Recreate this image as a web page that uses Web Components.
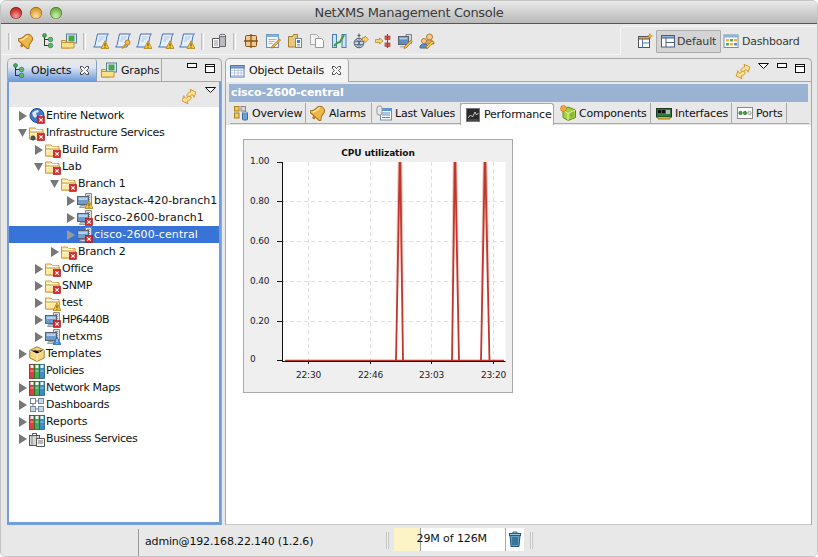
<!DOCTYPE html>
<html><head><meta charset="utf-8"><title>NetXMS Management Console</title>
<style>
html,body{margin:0;padding:0;background:#fff;width:818px;height:557px;overflow:hidden}
body{font:11px "DejaVu Sans",sans-serif;color:#111}
</style></head><body>
<x-window>
  <x-titlebar>NetXMS Management Console</x-titlebar>
  <x-coolbar></x-coolbar>
  <x-workspace>
    <x-pane slot="left" active style="width:215px">
      <x-tab slot="tabs" icon="tree" active closable w="90">Objects</x-tab>
      <x-tab slot="tabs" icon="foldermap" w="65">Graphs</x-tab>
      <x-object-tree></x-object-tree>
    </x-pane>
    <x-pane slot="right" style="width:587px">
      <x-tab slot="tabs" icon="table" current closable w="123">Object Details</x-tab>
      <x-details></x-details>
    </x-pane>
  </x-workspace>
  <x-status></x-status>
</x-window>
<script>
const X='<rect x="8.5" y="8.5" width="7" height="7" fill="#d9282e" stroke="#a81216" stroke-width=".6"/><path d="M10.300 10.300l3.400 3.400M13.700 10.300l-3.400 3.400" stroke="#fff" stroke-width="1.100"/>';
const W='<path d="M12 7.800l4 7.700H8z" fill="#f7c52e" stroke="#a87a10" stroke-width=".7"/><path d="M12 10.300v2.800M12 13.800v.9" stroke="#333" stroke-width=".9"/>';
const N='<path d="M12 7.800l4 7.700H8z" fill="#3f8fe0" stroke="#1d5da8" stroke-width=".7"/><path d="M12 10.300v2.800M12 13.800v.9" stroke="#fff" stroke-width=".9"/>';
const folder='<path d="M.5 14V3h5.500l1.500 1.500H14V14z" fill="#fbe6a6" stroke="#d49a3a"/><path d="M2 5.500h10.500" stroke="#fff" stroke-width="1.500"/><path d="M.5 14V7h14v7z" fill="#fde9a4" stroke="#d49a3a"/><path d="M1.500 8.500h12" stroke="#fff7d6"/>';
const monitor='<path d="M8.500 .5h6v11h-6z" fill="#dcdee0" stroke="#858b90"/><path d="M10 2.500h3M10 4.500h3M10 6.500h3" stroke="#8f959a"/><rect x=".5" y="3.500" width="11" height="8" fill="#6f9ad0" stroke="#5a646e"/><path d="M1.500 4.500h9v2.500h-9z" fill="#b4d0ee"/><path d="M3.500 12.500h5l1 2h-7z" fill="#c4c8cc" stroke="#6e7378" stroke-width=".6"/>';
const books='<rect x=".5" y="1.500" width="5" height="14" fill="#d9433f" stroke="#8e1d1b" stroke-width=".8"/><rect x="1.500" y="2" width="3" height="3" fill="#f6f6f6"/><rect x="5.500" y="1.500" width="5" height="14" fill="#4aa85a" stroke="#256b25" stroke-width=".8"/><rect x="6.500" y="2" width="3" height="3" fill="#f6f6f6"/><rect x="10.500" y="1.500" width="5" height="14" fill="#3d8cc8" stroke="#1c5c8e" stroke-width=".8"/><rect x="11.500" y="2" width="3" height="3" fill="#f6f6f6"/><path d="M1.500 8h3M6.500 8h3M11.500 8h3" stroke="#fff" stroke-opacity=".6"/>';
const script='<path d="M4.500 1h11c-1 .5-1.500 1.500-1.700 2.500L12 14H.5c1-.7 1.500-1.500 1.700-2.500z" fill="#e6effc" stroke="#4470b4"/><path d="M6 4h6M5.500 6h5M5 8h3" stroke="#a3bde2" stroke-width=".8"/>';
const syncArrow='<path d="M5.800 8C6 5.500 7.800 4 10 3.800L9 1.300 14.800 4 13.200 9.300 11.800 6.800C10.300 6.900 9.200 7.500 8.700 9z" fill="#fbe39a" stroke="#d99a2c"/>';
const ICONS={
bell:'<g transform="rotate(42 8 8)"><path d="M8 .6c3.200 0 4.500 2.400 4.500 5.200 0 2.800 1 4.200 2.400 5.500v1.500H1.100v-1.500C2.500 10 3.500 8.600 3.500 5.800 3.500 3 4.800.6 8 .6z" fill="#eeb548" stroke="#a9701c"/><path d="M6 3C5 5 5.500 8 3.500 11" stroke="#fdeab0" stroke-width="1.400" fill="none"/><circle cx="8" cy="14.300" r="1.500" fill="#b8791f"/></g>',
tree:'<path d="M4.500 2v11M4.500 6.500H9M4.500 12.500H9" stroke="#333" fill="none"/><circle cx="4.500" cy="2.500" r="2" fill="#4aa85a" stroke="#24703a" stroke-width=".6"/><circle cx="10.500" cy="6.500" r="2.300" fill="#5cb86a" stroke="#24703a" stroke-width=".6"/><circle cx="10.500" cy="12.500" r="2.300" fill="#5cb86a" stroke="#24703a" stroke-width=".6"/>',
foldermap:'<path d="M.5 15V7.500h4l1 1h3V15z" fill="#f8d77e" stroke="#c8912e"/><rect x="5.500" y="1" width="10" height="9" fill="#d8e6f2" stroke="#5c7f96"/><rect x="7.500" y="2.500" width="6" height="6" fill="#4ea34e"/><path d="M.5 15V9.500h12.500V15z" fill="#fbe08a" stroke="#c8912e"/>',
scriptw:script+W, scriptk:script+'<circle cx="12.500" cy="9.500" r="2.500" fill="#f0bc48" stroke="#a9701c" stroke-width=".8"/><path d="M10.800 11.500L7 15.500" stroke="#d2932a" stroke-width="2"/>',
docdb:'<path d="M1.500 5.500h7v9h-7z" fill="#fff" stroke="#555"/><path d="M3 8h4M3 10h4M3 12h4" stroke="#777" stroke-width=".8"/><path d="M8.500 2.500h6v11h-6z" fill="#b8bcc0" stroke="#666"/><ellipse cx="11.500" cy="2.500" rx="3" ry="1.200" fill="#e2e4e6" stroke="#666"/>',
grid:'<rect x="2.500" y="2.500" width="11" height="11" rx="1" fill="#ecca8a" stroke="#8a4e1c"/><path d="M8 1v14M1 8h14" stroke="#8a4e1c" stroke-width="1.300"/>',
note:'<rect x="1.500" y="1.500" width="12" height="13" fill="#f4f8fc" stroke="#6d8fb5"/><rect x="1.500" y="1.500" width="12" height="2.500" fill="#7fb0e0"/><path d="M3.500 6.500h8M3.500 8.500h6M3.500 10.500h4" stroke="#9fb6cf"/><path d="M14.500 6l1.200 1.200L8.500 14.500l-2 .5.500-2z" fill="#f0b748" stroke="#a9701c" stroke-width=".7"/>',
folderdoc:'<path d="M1.500 14V3.500h4l1-2h4V14z" fill="#e8c67a" stroke="#a57d2e"/><rect x="8.500" y="5.500" width="6" height="9" fill="#fff" stroke="#6d8aa5"/><rect x="10" y="7" width="3" height="3" fill="#4a82bc"/><path d="M10 11.500h3M10 13h3" stroke="#888" stroke-width=".8"/>',
copy:'<path d="M1.500 1.500h6l2 2v8h-8z" fill="#f4f4f4" stroke="#aaa"/><path d="M6.500 5.500h6l2 2v7h-8z" fill="#fff" stroke="#999"/>',
chart:'<rect x="1.500" y="1.500" width="4" height="13" fill="#cfe3f6" stroke="#4a7fb5"/><rect x="11" y="1.500" width="4" height="13" fill="#cfe3f6" stroke="#4a7fb5"/><path d="M3 13l3-3 3-1 4-7" stroke="#3c9a3c" stroke-width="2" fill="none"/>',
netarrow:'<circle cx="6" cy="10" r="4.800" fill="#c8d4e2" stroke="#4a5a72"/><path d="M2 8.500h8M2 11.500h8M6 5.500v9M3.500 6.500l5 7M8.500 6.500l-5 7" stroke="#4a5a72" stroke-width=".7"/><path d="M6 .5v4M4.500 2.500h3" stroke="#555"/><path d="M9.500 4.500H12V3l3.500 3.300L12 9.500V8H9.500z" fill="#f6d470" stroke="#b0811c" stroke-width=".7"/>',
arrownode:'<path d="M.5 6.500h4V5L8 8l-3.500 3V9.500h-4z" fill="#f6d470" stroke="#b0811c" stroke-width=".7"/><rect x="10" y="3" width="5" height="3.500" fill="#e05a50" stroke="#a02820" stroke-width=".6"/><rect x="10" y="10" width="5" height="3.500" fill="#e05a50" stroke="#a02820" stroke-width=".6"/><path d="M12.500 1v14" stroke="#555"/>',
pcedit:'<path d="M9 1.500h5.500v9H9z" fill="#d6d8da" stroke="#7d8388"/><rect x="1.500" y="3.500" width="10" height="8" fill="#5e8cc4" stroke="#5a646e"/><path d="M2.500 4.500h8v2h-8z" fill="#a9c8ea"/><path d="M3 13h7v1.500H3z" fill="#b4b8bc"/><path d="M14 7l1.500 1.500L9 15l-2 .5.500-2z" fill="#f0b748" stroke="#a9701c" stroke-width=".7"/>',
users:'<circle cx="10.500" cy="4" r="3" fill="#f3c98d" stroke="#b07c3a"/><path d="M6 11c0-3 2-4 4.500-4S15 8 15 11z" fill="#e8a54a" stroke="#b07c3a"/><circle cx="5" cy="8" r="2.500" fill="#f3c98d" stroke="#b07c3a"/><path d="M1 15c0-3 1.500-4 4-4s4 1 4 4z" fill="#5e8cc4" stroke="#3f6a9c"/><path d="M13 8l1.500 1.500L9 15l-2 .5.500-2z" fill="#f0d048" stroke="#a9701c" stroke-width=".7"/>',
sync:`${syncArrow}<g transform="rotate(180 8 8.500)">${syncArrow}</g>`,
newpersp:'<rect x="1.500" y="3.500" width="11" height="11" fill="#fff" stroke="#555"/><path d="M1.500 3.500h11V6h-11z" fill="#f0a050" stroke="#555"/><path d="M5.500 6v8.500M5.500 10h7" stroke="#4a7fb5"/><path d="M13 .5l.8 1.700 1.700.8-1.700.8-.8 1.700-.8-1.700-1.700-.8 1.700-.8z" fill="#f4c030" stroke="#b08010" stroke-width=".5"/>',
layout:'<rect x="1.500" y="2.500" width="13" height="11.500" fill="#fff" stroke="#46607e"/><rect x="1.500" y="2.500" width="13" height="2.500" fill="#8cb4dc" stroke="#46607e"/><path d="M6 5v9M6 9.500h8.500" stroke="#46607e"/>',
dash:'<rect x="1" y="2" width="14" height="12.500" fill="#fff" stroke="#6d8fb5"/><rect x="1" y="2" width="14" height="2.500" fill="#8cb4dc"/><rect x="3" y="6" width="3" height="2.500" fill="#e8b830"/><rect x="7" y="6" width="3" height="2.500" fill="#5caa5c"/><rect x="11" y="6" width="3" height="2.500" fill="#e8b830"/><rect x="3" y="10" width="3" height="2.500" fill="#5caa5c"/><rect x="7" y="10" width="3" height="2.500" fill="#e8b830"/><rect x="11" y="10" width="3" height="2.500" fill="#5c8ac8"/>',
table:'<rect x="1.500" y="2.500" width="13.500" height="11.500" fill="#fff" stroke="#5678a8"/><rect x="1.500" y="2.500" width="13.500" height="2.500" fill="#7ea6d8" stroke="#5678a8"/><path d="M2 7.500h13M2 10h13M2 12.500h13M5.500 5v9M9 5v9M12 5v9" stroke="#a9bfdc" stroke-width=".8"/>',
overview:'<rect x="1.500" y="1.500" width="4.500" height="4.500" fill="#f3cc60" stroke="#a8801c"/><rect x="8" y="1.500" width="4.500" height="4.500" fill="#d8d8d8" stroke="#888"/><rect x="1.500" y="8" width="4.500" height="5" fill="#f3cc60" stroke="#a8801c"/><rect x="9.500" y="7.500" width="5" height="7.500" rx="1" fill="#6ea2d8" stroke="#3f6a9c"/><ellipse cx="12" cy="7.800" rx="2.500" ry="1" fill="#bcd6f0" stroke="#3f6a9c" stroke-width=".6"/>',
lastvalues:'<rect x="4.500" y="3.500" width="11" height="11.500" fill="#fff" stroke="#6d8fb5"/><rect x="4.500" y="3.500" width="11" height="2.500" fill="#5a9ad8"/><path d="M6 8h8M6 10h8M6 12.500h8" stroke="#4f86c0"/><rect x="1" y="1" width="5" height="9" rx="2" fill="#e8e8e8" stroke="#999"/>',
perf:'<rect x="1.500" y="1.500" width="13" height="13" fill="#2c2c2c" stroke="#777"/><path d="M3 11l2.500-3 2 2 2.500-5 1.500 3 2-2" stroke="#c8c8c8" fill="none"/><path d="M3 13h10" stroke="#666"/>',
comp:'<path d="M8 2l7.500 3v7.500L8 15.500 3 12.500V5z" fill="#a4d040" stroke="#5f8c1c"/><path d="M8 8.500v7M8 8.500L15.500 5M8 8.500L3 5" stroke="#e4f2a8"/><path d="M11 7.500v5M13 6.500v5" stroke="#5f8c1c" stroke-width=".7"/><circle cx="3.500" cy="3.500" r="3" fill="#f2a83c" stroke="#b8761c" stroke-width=".6"/>',
iface:'<rect x=".5" y="3.500" width="15" height="8.500" fill="#2f7a3a" stroke="#1a3c20"/><rect x="2" y="5" width="3" height="3" fill="#111"/><rect x="6" y="5" width="3" height="3" fill="#111"/><rect x="10" y="5" width="4" height="4" fill="#b7b7b7"/><path d="M2 12v2h12v-2" fill="#d6b13c" stroke="#9a7c1c"/>',
ports:'<rect x=".5" y="2.500" width="15" height="11" fill="#fff" stroke="#888"/><circle cx="3.500" cy="8" r="1.700" fill="#4aa04a" stroke="#255c25" stroke-width=".6"/><circle cx="8" cy="8" r="1.700" fill="#4aa04a" stroke="#255c25" stroke-width=".6"/><circle cx="12.500" cy="8" r="1.700" fill="#e8e8e8" stroke="#666" stroke-width=".6"/>',
trash:'<path d="M3 4.500h10l-1 11H4z" fill="#5f9fc4" stroke="#1f5a82"/><path d="M6 6v8M8 6v8M10 6v8" stroke="#174a6c"/><rect x="2.500" y="2.500" width="11" height="2" fill="#a2c8de" stroke="#1f5a82"/><path d="M6 2.500V1h4v1.500" fill="none" stroke="#1f5a82"/>',
globe:'<circle cx="8" cy="7.500" r="7" fill="#3f78c8" stroke="#1c4c94"/><path d="M3 5c2-2 4-3 6-3l1 2-3 1 1 3-2 2-2-2zM10 8l3-1 1 2-3 3z" fill="#dfe9f6"/>',
sfolder:folder, net:monitor, books,
infra:folder+'<circle cx="4" cy="13" r="2.200" fill="#555" stroke="#222" stroke-width=".5"/>',
box:'<path d="M8 .8l7.200 3.400v7.800L8 15.500.8 12V4.200z" fill="#f6d680" stroke="#a57d2e"/><path d="M1 4.500l7 3.600 7-3.600M8 8.100v7.200" stroke="#fff3c8"/><path d="M4.500 2.500l7 3.700" stroke="#d8ad4a"/>',
dashs:'<rect x="1.500" y="1.500" width="5" height="5" fill="#fff" stroke="#7a8a9c"/><rect x="9.500" y="1.500" width="5" height="5" fill="#c9d6e6" stroke="#7a8a9c"/><rect x="1.500" y="9.500" width="5" height="5" fill="#c9d6e6" stroke="#7a8a9c"/><rect x="9.500" y="9.500" width="5" height="5" fill="#c9d6e6" stroke="#7a8a9c"/><path d="M4 6.500v3M7 4h2.500M7 12h2.500" stroke="#4a7fb5"/>',
biz:'<rect x=".5" y="4.500" width="10" height="10" fill="#d4d6d8" stroke="#555"/><path d="M3.500 4.500v-2h4v2" fill="none" stroke="#555"/><path d="M3 5v9M7.500 5v9" stroke="#888"/><path d="M7.500 7.500h8v8h-8z" fill="#f4f4f4" stroke="#555"/><path d="M9 10h5M9 12h5" stroke="#777"/>'
};
const TRI='<svg width="11" height="6" viewBox="0 0 11 6" style="display:block;flex:none"><path d="M.5.500h10L5.500 5.500z" fill="#fff" stroke="#111"/></svg>';
function def(n,cls){customElements.define(n,cls)}
function shadow(el,html){el.attachShadow({mode:'open'}).innerHTML=html;return el.shadowRoot}
def('x-icon',class extends HTMLElement{connectedCallback(){
  const n=this.getAttribute('name'),b=this.getAttribute('badge');
  const bb=b=='x'?X:b=='w'?W:b=='n'?N:'';
  shadow(this,`<style>:host{display:block;width:16px;height:16px;flex:none}svg{display:block}</style><svg width="16" height="16" viewBox="0 0 16 16">${ICONS[n]||''}${bb}</svg>`);
}});
def('x-window',class extends HTMLElement{connectedCallback(){
  shadow(this,`<style>:host{display:flex;flex-direction:column;width:818px;height:557px;box-sizing:border-box;background:#e8e8e8;border:1px solid #c4c4c4;border-radius:6px 6px 5px 5px;overflow:hidden}</style><slot></slot>`);
}});
def('x-titlebar',class extends HTMLElement{connectedCallback(){
  shadow(this,`<style>:host{display:flex;align-items:center;height:22px;flex:none;position:relative;justify-content:center;background:linear-gradient(#e9e9e9,#b9b9b9);border-bottom:1px solid #565656;font:13px "DejaVu Sans",sans-serif;color:#3a3a3a;letter-spacing:-.31px}
  .l{position:absolute;left:9px;top:6px;display:flex;gap:8px}
  i{display:block;width:12px;height:12px;border-radius:50%;box-shadow:inset 0 0 0 .5px rgba(0,0,0,.45)}
  .r{background:radial-gradient(circle at 50% 75%,#f6a09c,#c9302c 60%,#9c2020)}.y{background:radial-gradient(circle at 50% 75%,#fde0a0,#e0a030 60%,#b07c18)}.g{background:radial-gradient(circle at 50% 75%,#d0f0b0,#76b84c 60%,#4c8a2c)}
  </style><div class="l"><i class="r"></i><i class="y"></i><i class="g"></i></div><slot></slot>`);
}});
const grip='<b class="grip"></b>';
def('x-coolbar',class extends HTMLElement{connectedCallback(){
  const ic=(a)=>a.map(n=>`<x-icon name="${n}"></x-icon>`).join('');
  shadow(this,`<style>:host{display:flex;flex:none;height:34px;box-sizing:border-box;align-items:stretch;background:#e8e8e8}
  .tools{flex:1;display:flex;align-items:center;padding:4px 0 0 7px;box-sizing:border-box;height:31px;border-bottom:1px solid #f6f6f6}
  .gp{display:flex;gap:5.500px;margin-right:6px}.gp.w{gap:6px}
  .grip{display:block;width:1px;height:17px;border:1px solid #bdbdbd;border-right-color:#fff;border-width:0 1px;flex:none;background:#e0e0e0;margin-right:7px}
  .p{width:197px;box-sizing:border-box;margin-top:2px;height:29px;border:1px solid #f6f6f6;border-right:0;border-bottom:0;border-top-left-radius:4px;display:flex;align-items:center;padding-left:16px;color:#3a3a3a;gap:3px}
  .btn{display:flex;align-items:center;gap:3px;height:23px;box-sizing:border-box}
  .on{background:#d4d4d4;border:1px solid #ababab;width:65px;border-radius:1px;padding-left:3px;gap:1px}
  span{letter-spacing:-.13px}.btn:last-child span{letter-spacing:-.25px}.btn:last-child{margin-left:-1px}
  </style><div class="tools">${grip}<div class="gp">${ic(['bell','tree','foldermap'])}</div>${grip}<div class="gp">${ic(['scriptw','scriptk','scriptw','scriptw','scriptw'])}</div>${grip}<div class="gp">${ic(['docdb'])}</div>${grip}<div class="gp w">${ic(['grid','note','folderdoc','copy','chart','netarrow','arrownode','pcedit','users'])}</div></div>
  <div class="p"><x-icon name="newpersp"></x-icon><div class="btn on"><x-icon name="layout"></x-icon><span>Default</span></div><div class="btn"><x-icon name="dash"></x-icon><span>Dashboard</span></div></div>`);
}});
def('x-workspace',class extends HTMLElement{connectedCallback(){
  shadow(this,`<style>:host{display:flex;gap:3px;flex:none;height:467px;padding:0 5px 0 6px;box-sizing:content-box}::slotted(*){height:100%}</style><slot name="left"></slot><slot name="right"></slot>`);
}});
def('x-tab',class extends HTMLElement{connectedCallback(){
  const a=this.hasAttribute('active'),c=this.hasAttribute('current');
  shadow(this,`<style>:host{display:flex;align-items:center;height:23px;box-sizing:border-box;width:${this.getAttribute('w')}px;padding-left:${a?3:4}px;gap:4px;border-right:1px solid #a6a6a6;color:#111;letter-spacing:-.18px;border-bottom:1px solid #a6a6a6;flex:none;border-top-left-radius:4px;
  ${a?'background:linear-gradient(#e8e8e8 8%,#dfe6f0 35%,#78a1de 90%,#6c9ade);border-right-color:#8a9fc0;border-bottom:0;border-top-right-radius:3px;border-left:1px solid #a6a6a6':''}
  ${c?'background:#f4f4f4;border-bottom:0;border-top-right-radius:3px;padding-left:3px':''}}
  svg{margin-left:auto;margin-right:6px}</style><x-icon name="${this.getAttribute('icon')}"></x-icon><slot></slot>${this.hasAttribute('closable')?'<svg width="11" height="11" viewBox="0 0 11 11"><path d="M1.500 1.500h2l2 2 2-2h2v2l-2 2 2 2v2h-2l-2-2-2 2h-2v-2l2-2-2-2z" fill="#fff" stroke="#222" stroke-width=".8"/></svg>':''}`);
}});
const minmax='<svg width="10" height="5" viewBox="0 0 10 5" style="display:block;flex:none"><rect x=".5" y=".5" width="9" height="4" fill="#fff" stroke="#111"/></svg><svg width="10" height="9" viewBox="0 0 10 9" style="display:block;flex:none;margin-top:1px"><rect x=".5" y=".5" width="9" height="8" fill="#fff" stroke="#111"/><path d="M0 2.500h10" stroke="#111"/></svg>';
def('x-pane',class extends HTMLElement{connectedCallback(){
  const a=this.hasAttribute('active');
  shadow(this,`<style>:host{display:flex;flex-direction:column;box-sizing:border-box;border:1px solid #a6a6a6;border-radius:5px 5px 0 0;background:#e8e8e8;flex:none;overflow:hidden;${a?'border-width:1px 1px 0 0':'border-bottom-color:#c8c8c8'}}
  .bar{display:flex;height:23px;flex:none;position:relative}
  .fill{flex:1;border-bottom:1px solid #a6a6a6;display:flex;align-items:flex-start;padding-top:4px;box-sizing:border-box;justify-content:flex-end;gap:8px;padding-right:6px}
  .fill x-icon{margin:0 -1px 0 0}
  .body{flex:1;min-height:0;display:flex;flex-direction:column;${a?'border:2px solid #739ede;border-top:0;border-bottom-width:3px;background:#fff':''}}
  </style><div class="bar"><slot name="tabs"></slot><div class="fill">${a?'':`<x-icon name="sync"></x-icon>${TRI}`}${minmax}</div></div><div class="body"><slot></slot></div>`);
}});
def('x-tree-row',class extends HTMLElement{connectedCallback(){
  const d=+this.getAttribute('d')||0,ar=this.getAttribute('a'),sel=this.hasAttribute('sel');
  const arrow=ar=='o'?`<polygon points="0,2 9,2 4.500,10" fill="#777"/>`:ar=='c'?`<polygon points="1,1 9,6 1,11" fill="${sel?'#9a9a9a':'#777'}"/>`:'';
  shadow(this,`<style>:host{display:flex;align-items:center;height:17px;flex:none;box-sizing:border-box;padding-left:${9+16*d}px;white-space:nowrap;overflow:hidden;letter-spacing:${this.getAttribute('ls')}px;${sel?'background:#3873d7;color:#fff':''}}
  svg{flex:none;margin-right:2px}.t{margin-left:1px}</style><svg width="9" height="12" viewBox="0 0 9 12">${arrow}</svg><x-icon name="${this.getAttribute('i')}" badge="${this.getAttribute('b')||''}"></x-icon><span class="t"><slot></slot></span>`);
}});
def('x-object-tree',class extends HTMLElement{connectedCallback(){
  const rows=[
  [0,'c','globe','x','Entire Network',0,-.27],[0,'o','infra','x','Infrastructure Services',0,-.29],[1,'c','sfolder','x','Build Farm',0,-.22],[1,'o','sfolder','x','Lab',0,-.12],[2,'o','sfolder','x','Branch 1',0,-.22],
  [3,'c','net','w','baystack-420-branch1',0,-.02],[3,'c','net','x','cisco-2600-branch1',0,.05],[3,'c','net','x','cisco-2600-central',1,.1],[2,'c','sfolder','x','Branch 2',0,-.22],[1,'c','sfolder','x','Office',0,-.2],[1,'c','sfolder','x','SNMP',0,-.3],[1,'c','sfolder','w','test',0,-.12],[1,'c','net','x','HP6440B',0,-.5],[1,'c','net','n','netxms',0,-.12],
  [0,'c','box','','Templates',0,-.05],[0,'','books','','Policies',0,-.35],[0,'c','books','','Network Maps',0,-.35],[0,'c','dashs','','Dashboards',0,-.22],[0,'c','books','','Reports',0,-.12],[0,'c','biz','','Business Services',0,-.42]];
  shadow(this,`<style>:host{display:flex;flex-direction:column;flex:1;min-height:0;background:#fff}
  .tb{height:25px;flex:none;background:#e8e8e8;display:flex;justify-content:flex-end;align-items:flex-start;gap:8px;padding:5px 3px 0 0;box-sizing:border-box}
  .tb x-icon{margin-top:1px}
  .list{flex:1;display:flex;flex-direction:column}
  </style><div class="tb"><x-icon name="sync"></x-icon>${TRI}</div><div class="list">${rows.map(r=>`<x-tree-row d="${r[0]}" a="${r[1]}" i="${r[2]}" b="${r[3]}" ls="${r[6]}"${r[5]?' sel':''}>${r[4]}</x-tree-row>`).join('')}</div>`);
}});
def('x-dtab',class extends HTMLElement{connectedCallback(){
  const on=this.hasAttribute('on');
  shadow(this,`<style>:host{display:flex;align-items:center;box-sizing:border-box;height:${on?22:21}px;width:${this.getAttribute('w')}px;padding-left:${this.getAttribute('p')||4}px;gap:3px;flex:none;letter-spacing:-.2px;color:#111;border-right:1px solid #a8a8a8;border-bottom:1px solid #a8a8a8;${on?'background:#fff;border:1px solid #a8a8a8;border-bottom:0;border-radius:3px 3px 0 0;margin-left:-1px;z-index:1':''}}</style><x-icon name="${this.getAttribute('i')}"></x-icon><slot></slot>`);
}});
def('x-chart',class extends HTMLElement{connectedCallback(){
  const ys=[[161,'1.00'],[200.5,'0.80'],[240.5,'0.60'],[280.5,'0.40'],[320.5,'0.20'],[359.5,'0']];
  const xs=[[308.5,'22:30'],[370.5,'22:46'],[431.5,'23:03'],[493.5,'23:20']];
  const ox=243,oy=138;
  const spike=(a,b,c)=>`<path d="M${a-ox-.5} ${360-oy}L${b-ox-.5} ${161-oy}M${b-ox+.5} ${161-oy}L${c-ox+.5} ${360-oy}" stroke="url(#pale)" stroke-width="3.400" fill="none"/><path d="M${a-ox} ${360-oy}L${b-ox-.3} ${161-oy}M${b-ox+.3} ${161-oy}L${c-ox} ${360-oy}" stroke="#c0352c" stroke-width="1.800" fill="none"/>`;
  shadow(this,`<style>:host{display:block;width:270px;height:254px;flex:none;margin:14px 0 0 17px}svg{display:block}text{font:9px "DejaVu Sans",sans-serif;fill:#1c2230;letter-spacing:-.2px}</style>
  <svg width="270" height="254" viewBox="0 0 270 254"><defs><linearGradient id="pale" gradientUnits="userSpaceOnUse" x1="0" y1="23" x2="0" y2="190"><stop offset="0" stop-color="#e8a090" stop-opacity=".75"/><stop offset="1" stop-color="#e8a090" stop-opacity="0"/></linearGradient></defs><rect x=".5" y=".5" width="269" height="253" fill="#efefef" stroke="#a9a9a9"/>
  <rect x="${282-ox}" y="${161-oy}" width="${505.5-282}" height="199" fill="#fff"/>
  <text x="135" y="16.500" text-anchor="middle" style="font-weight:700;letter-spacing:-.1px;fill:#111">CPU utilization</text>
  ${ys.slice(1,5).map(y=>`<path d="M${283-ox} ${y[0]-oy}H${505-ox}" stroke="#e0e0e0" stroke-dasharray="4 3"/>`).join('')}
  ${xs.map(x=>`<path d="M${x[0]-ox} ${161-oy}V${360-oy}" stroke="#e0e0e0" stroke-dasharray="4 3"/>`).join('')}
  ${spike(396,400,403)}${spike(452,455,459)}${spike(481,485,489.5)}
  <path d="M${285-ox} ${359.5-oy}H${504-ox}" stroke="#c0352c" stroke-width="1.600"/>
  <path d="M${282.5-ox} ${161-oy}V${360-oy}M${282-ox} ${360.5-oy}H${505.5-ox}" stroke="#111" fill="none"/>
  ${ys.map(y=>`<path d="M${277-ox} ${Math.floor(y[0])+.5-oy}H${282-ox}" stroke="#111"/><text x="${250-ox}" y="${y[0]-oy+(y[1]=='0'?1:2)}">${y[1]}</text>`).join('')}
  ${xs.map(x=>`<path d="M${x[0]-ox} ${360-oy}v3" stroke="#111"/><text x="${x[0]-ox}" y="${377-oy}" text-anchor="middle">${x[1]}</text>`).join('')}
  </svg>`);
}});
def('x-details',class extends HTMLElement{connectedCallback(){
  const t=[['overview',76,'Overview',3],['bell',66,'Alarms'],['lastvalues',89,'Last Values'],['perf',94,'Performance',4,1],['comp',97,'Components',6],['iface',81,'Interfaces',5],['ports',55,'Ports',5]];
  shadow(this,`<style>:host{display:flex;flex-direction:column;flex:1;min-height:0;padding:2px 2px 0 2px;background:#e8e8e8}
  .hd{height:18px;flex:none;background:#9bb3d2;color:#fff;font-weight:700;font-size:11px;line-height:18px;padding-left:2px;letter-spacing:-.1px;margin:0 1px}
  .tabs{display:flex;height:22px;flex:none;margin:1px 0 0;padding-left:2px;align-items:flex-start;position:relative}
  .tabs:after{content:"";flex:1;height:21px;box-sizing:border-box;border-bottom:1px solid #a8a8a8}
  .c{flex:1;min-height:0;background:#fff;margin:0 -2px;display:flex;flex-direction:column}
  </style><div class="hd">cisco-2600-central</div><div class="tabs">${t.map(x=>`<x-dtab i="${x[0]}" w="${x[1]}" p="${x[3]||4}"${x[4]?' on':''}>${x[2]}</x-dtab>`).join('')}</div><div class="c"><x-chart></x-chart></div>`);
}});
def('x-status',class extends HTMLElement{connectedCallback(){
  shadow(this,`<style>:host{display:flex;align-items:center;height:32px;flex:none;background:#e8e8e8;color:#111;letter-spacing:-.17px;font-size:11px}
  .s{width:0;height:27px;border-left:1px solid #999;margin-left:137px;margin-top:3px}
  .a{margin-left:6px;width:241px}
  .g{width:1px;height:17px;border:1px solid #c4c4c4;border-width:0 1px;background:#f4f4f4;margin-top:-2px}
  .h{position:relative;width:130px;height:23px;box-sizing:border-box;margin:-3px 0 0 5px;background:#fff;display:flex;align-items:center}
  .bar{position:absolute;left:0;top:0;bottom:0;width:26px;background:#fcf3c6;border-right:1px solid #999}
  .tx{position:relative;margin-left:22.500px;margin-top:-2px;letter-spacing:-.1px}
  x-icon{position:absolute;right:1px;top:3px}
  .d{position:absolute;right:18px;top:0;bottom:0;border-left:1px solid #aaa}
  </style><div class="s"></div><div class="a">admin@192.168.22.140 (1.2.6)</div><div class="g"></div><div class="h"><div class="bar"></div><div class="tx">29M of 126M</div><div class="d"></div><x-icon name="trash"></x-icon></div><div class="g" style="margin-left:6px"></div>`);
}});
</script>
</body></html>
